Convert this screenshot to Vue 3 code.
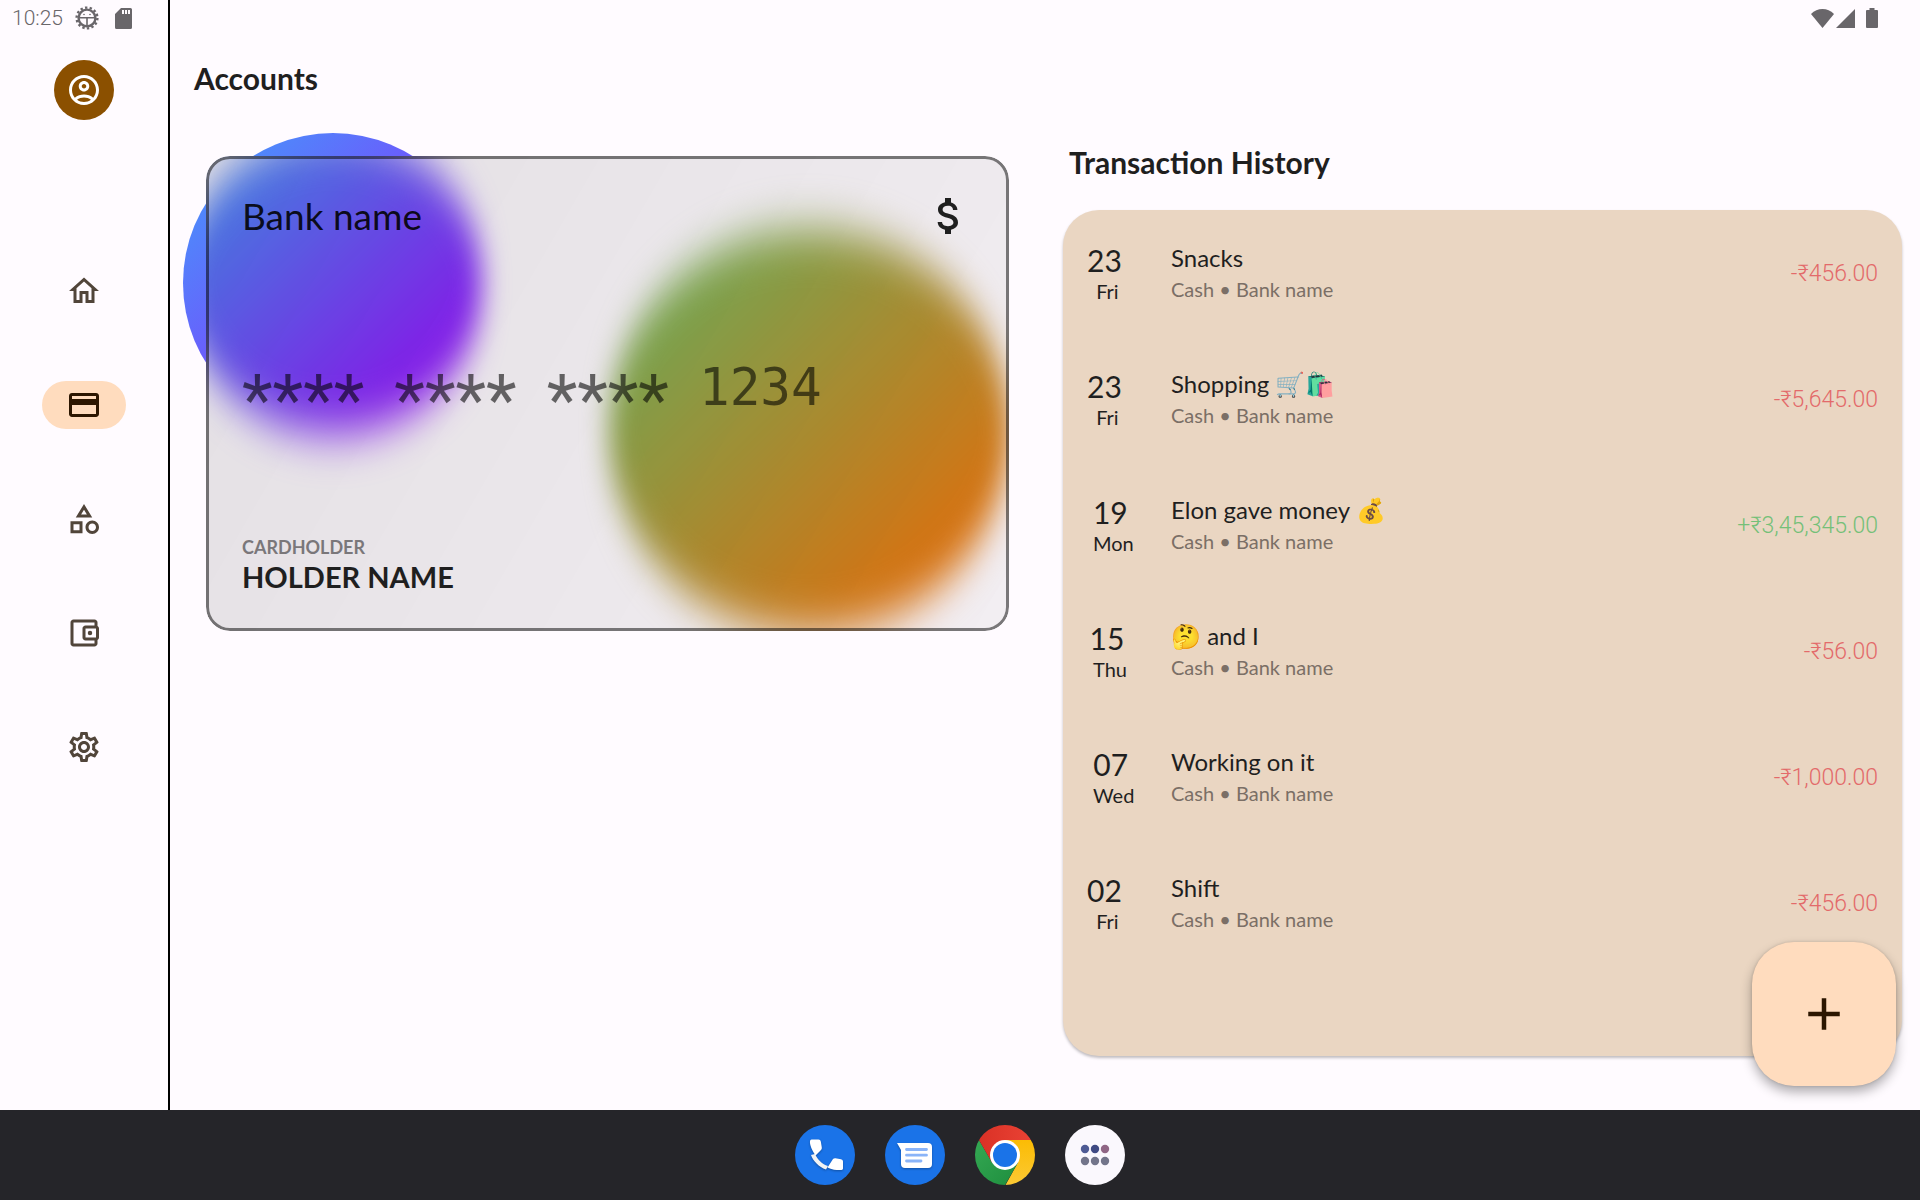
<script setup>
const navItems = [
  {
    label: 'Home',
    path: 'M12 5.69l5 4.5V18h-2v-6H9v6H7v-7.81l5-4.5M12 3L2 12h3v8h6v-6h2v6h6v-8h3L12 3z',
  },
  {
    label: 'Accounts',
    active: true,
    path: 'M20 4H4c-1.11 0-1.99.89-1.99 2L2 18c0 1.11.89 2 2 2h16c1.11 0 2-.89 2-2V6c0-1.11-.89-2-2-2zm0 14H4v-6h16v6zm0-10H4V6h16v2z',
  },
  {
    label: 'Categories',
    path: 'M12 2l-5.5 9h11L12 2zm0 3.84L13.93 9h-3.87L12 5.84zM17.5 13c-2.49 0-4.5 2.01-4.5 4.5s2.01 4.5 4.5 4.5 4.5-2.01 4.5-4.5-2.01-4.5-4.5-4.5zm0 7c-1.38 0-2.5-1.12-2.5-2.5s1.12-2.5 2.5-2.5 2.5 1.12 2.5 2.5-1.12 2.5-2.5 2.5zM3 21.5h8v-8H3v8zm2-6h4v4H5v-4z',
  },
  {
    label: 'Wallet',
    path: 'M21 7.28V5c0-1.1-.9-2-2-2H5c-1.11 0-2 .9-2 2v14c0 1.1.89 2 2 2h14c1.1 0 2-.9 2-2v-2.28c.59-.35 1-.98 1-1.72V9c0-.74-.41-1.37-1-1.72zM20 9v6h-7V9h7zM5 19V5h14v2h-6c-1.1 0-2 .9-2 2v6c0 1.1.9 2 2 2h6v2H5z M16 10.5a1.5 1.5 0 1 0 0 3a1.5 1.5 0 1 0 0-3z',
  },
  {
    label: 'Settings',
    path: 'M19.43 12.98c.04-.32.07-.64.07-.98 0-.34-.03-.66-.07-.98l2.11-1.65c.19-.15.24-.42.12-.64l-2-3.46c-.09-.16-.26-.25-.44-.25-.06 0-.12.01-.17.03l-2.49 1c-.52-.4-1.08-.73-1.69-.98l-.38-2.65C14.46 2.18 14.25 2 14 2h-4c-.25 0-.46.18-.49.42l-.38 2.65c-.61.25-1.17.59-1.69.98l-2.49-1c-.06-.02-.12-.03-.18-.03-.17 0-.34.09-.43.25l-2 3.46c-.13.22-.07.49.12.64l2.11 1.65c-.04.32-.07.65-.07.98 0 .33.03.66.07.98l-2.11 1.65c-.19.15-.24.42-.12.64l2 3.46c.09.16.26.25.44.25.06 0 .12-.01.17-.03l2.49-1c.52.4 1.08.73 1.69.98l.38 2.65c.03.24.24.42.49.42h4c.25 0 .46-.18.49-.42l.38-2.65c.61-.25 1.17-.59 1.69-.98l2.49 1c.06.02.12.03.18.03.17 0 .34-.09.43-.25l2-3.46c.12-.22.07-.49-.12-.64l-2.11-1.65zm-1.98-1.71c.04.31.05.52.05.73 0 .21-.02.43-.05.73l-.14 1.13.89.7 1.08.84-.7 1.21-1.27-.51-1.04-.42-.9.68c-.43.32-.84.56-1.25.73l-1.06.43-.16 1.13-.2 1.35h-1.4l-.19-1.35-.16-1.13-1.06-.43c-.43-.18-.83-.41-1.23-.71l-.91-.7-1.06.43-1.27.51-.7-1.21 1.08-.84.89-.7-.14-1.13c-.03-.31-.05-.54-.05-.74s.02-.43.05-.73l.14-1.13-.89-.7-1.08-.84.7-1.21 1.27.51 1.04.42.9-.68c.43-.32.84-.56 1.25-.73l1.06-.43.16-1.13.2-1.35h1.39l.19 1.35.16 1.13 1.06.43c.43.18.83.41 1.23.71l.91.7 1.06-.43 1.27-.51.7 1.21-1.07.85-.89.7.14 1.13zM12 8c-2.21 0-4 1.79-4 4s1.79 4 4 4 4-1.79 4-4-1.79-4-4-4zm0 6c-1.1 0-2-.9-2-2s.9-2 2-2 2 .9 2 2-.9 2-2 2z',
  },
]

const maskedGroups = ['****', '****', '****']

const transactions = [
  { day: '23', weekday: 'Fri', title: 'Snacks', amount: '-₹456.00' },
  { day: '23', weekday: 'Fri', title: 'Shopping 🛒🛍️', amount: '-₹5,645.00' },
  { day: '19', weekday: 'Mon', title: 'Elon gave money 💰', amount: '+₹3,45,345.00', income: true },
  { day: '15', weekday: 'Thu', title: '🤔 and I', amount: '-₹56.00' },
  { day: '07', weekday: 'Wed', title: 'Working on it', amount: '-₹1,000.00' },
  { day: '02', weekday: 'Fri', title: 'Shift', amount: '-₹456.00' },
]
</script>

<template>
  <div class="screen">
    <div class="app">
      <aside class="rail">
        <div class="status status-left">
          <time>10:25</time>
          <svg class="gear" viewBox="0 0 24 24" aria-hidden="true">
            <circle cx="12" cy="12" r="10.4" fill="none" stroke="currentColor" stroke-width="2.4" stroke-dasharray="2.4 2.267" />
            <circle cx="12" cy="12" r="8.4" fill="none" stroke="currentColor" stroke-width="2.4" />
            <path d="M4 11.800h16M12 12v8" fill="none" stroke="currentColor" stroke-width="1.600" />
            <circle cx="9" cy="8.500" r=".8" fill="currentColor" />
            <circle cx="15" cy="8.500" r=".8" fill="currentColor" />
          </svg>
          <svg class="sd" viewBox="0 0 17 21" aria-hidden="true">
            <path fill="currentColor" fill-rule="evenodd" d="M6 0h9.500q1.500 0 1.500 1.500v18q0 1.500-1.500 1.500h-14Q0 21 0 19.500V6zM7 2v4h2V2zM10 2v4h2V2zM13 2v4h2V2z" />
          </svg>
        </div>
        <button class="avatar" type="button" aria-label="Profile">
          <svg viewBox="0 0 24 24" aria-hidden="true">
            <path fill="currentColor" d="M12 2C6.480 2 2 6.480 2 12s4.480 10 10 10 10-4.480 10-10S17.520 2 12 2zM7.350 18.500C8.660 17.560 10.260 17 12 17s3.340.56 4.650 1.500C15.340 19.440 13.740 20 12 20s-3.340-.56-4.650-1.500zm10.790-1.380C16.450 15.800 14.320 15 12 15s-4.450.8-6.140 2.120C4.700 15.730 4 13.950 4 12c0-4.420 3.580-8 8-8s8 3.580 8 8c0 1.950-.7 3.730-1.860 5.120zM12 6c-1.930 0-3.500 1.570-3.500 3.500S10.070 13 12 13s3.500-1.570 3.500-3.500S13.930 6 12 6zm0 5c-.83 0-1.500-.67-1.500-1.500S11.170 8 12 8s1.500.67 1.500 1.500S12.830 11 12 11z" />
          </svg>
        </button>
        <nav class="nav" aria-label="Main">
          <button
            v-for="item in navItems"
            :key="item.label"
            type="button"
            class="nav-item"
            :class="{ active: item.active }"
            :aria-label="item.label"
          >
            <svg viewBox="0 0 24 24" aria-hidden="true"><path :d="item.path" fill="currentColor" /></svg>
          </button>
        </nav>
      </aside>

      <main class="content">
        <div class="status status-right">
          <svg class="wifi" viewBox="0 0 23 19" aria-hidden="true"><path fill="currentColor" d="M0 5Q5 0 11.500 0T23 5L11.500 19z" /></svg>
          <svg class="signal" viewBox="0 0 19 19" aria-hidden="true"><path fill="currentColor" d="M19 0v19H0z" /></svg>
          <svg class="battery" viewBox="0 0 12 20" aria-hidden="true"><path fill="currentColor" d="M3.500 0h5v2H11q1 0 1 1v16q0 1-1 1H1q-1 0-1-1V3q0-1 1-1h2.500z" /></svg>
        </div>

        <h1 class="heading">Accounts</h1>

        <div class="columns">
          <section>
            <div class="card-stage">
              <div class="orb orb-blue"></div>
              <article class="bank-card">
                <div class="glass" aria-hidden="true">
                  <div class="orb orb-blue blurred"></div>
                  <div class="orb orb-orange blurred"></div>
                  <div class="tint"></div>
                </div>
                <header class="card-top">
                  <span class="bank">Bank name</span>
                  <svg class="dollar" viewBox="0 0 24 24" role="img" aria-label="Dollar">
                    <path fill="currentColor" d="M11.800 10.900c-2.270-.59-3-1.200-3-2.150 0-1.090 1.010-1.850 2.700-1.850 1.780 0 2.440.85 2.500 2.100h2.210c-.07-1.720-1.120-3.300-3.210-3.810V3h-3v2.160c-1.940.42-3.500 1.680-3.500 3.610 0 2.310 1.910 3.460 4.700 4.130 2.500.6 3 1.480 3 2.410 0 .69-.49 1.790-2.700 1.790-2.060 0-2.870-.92-2.980-2.100h-2.200c.12 2.190 1.760 3.420 3.680 3.830V21h3v-2.150c1.950-.37 3.500-1.500 3.500-3.550 0-2.840-2.430-3.810-4.700-4.400z" />
                  </svg>
                </header>
                <div class="number">
                  <span v-for="(group, i) in maskedGroups" :key="i" class="mask">{{ group }}</span>
                  <span>1234</span>
                </div>
                <footer>
                  <div class="holder-label">CARDHOLDER</div>
                  <div class="holder">HOLDER NAME</div>
                </footer>
              </article>
            </div>
          </section>

          <section class="history">
            <h2 class="heading">Transaction History</h2>
            <ul class="list">
              <li v-for="(t, i) in transactions" :key="i" class="row">
                <div class="date">
                  <div class="date-stack">
                    <span class="day">{{ t.day }}</span>
                    <span class="weekday">{{ t.weekday }}</span>
                  </div>
                </div>
                <div class="info">
                  <div class="title">{{ t.title }}</div>
                  <div class="sub">Cash • Bank name</div>
                </div>
                <div class="amount" :class="{ income: t.income }">{{ t.amount }}</div>
              </li>
            </ul>
          </section>
        </div>

        <button class="fab" type="button" aria-label="Add transaction">
          <svg viewBox="0 0 24 24" aria-hidden="true"><path fill="currentColor" d="M19 13h-6v6h-2v-6H5v-2h6V5h2v6h6v2z" /></svg>
        </button>
      </main>
    </div>

    <footer class="dock">
      <button type="button" aria-label="Phone">
        <svg viewBox="0 0 60 60" aria-hidden="true">
          <circle cx="30" cy="30" r="30" fill="#1a73e8" />
          <g class="lifted">
            <path fill="#f1f3f4" d="M20 29C23 35 27 39 33 41L31 44.500C24 42 18 36 16 30z" />
            <path fill="#fff" d="M16.500 14.500h7q2 0 2.300 2l1 6q.2 1.500-.8 2.500L20.500 30.500q-2-3-3-5-3-6-2.500-9.500.2-1.500 1.500-1.500z" />
            <path fill="#fff" d="M48 43.500v-7q0-2-2-2.300l-5.500-.9q-1.500-.2-2.500.8L32.500 42.500q3 1.500 6.500 2.200 4 .6 7.500.3 1.500-.1 1.500-1.500z" />
          </g>
        </svg>
      </button>
      <button type="button" aria-label="Messages">
        <svg viewBox="0 0 60 60" aria-hidden="true">
          <circle cx="30" cy="30" r="30" fill="#1a73e8" />
          <path class="lifted" fill="#fff" d="M12 18h31q4 0 4 4v17q0 4-4 4H20q-4 0-4-4V25z" />
          <path d="M21.500 24.500h20M21.500 30.200h20M21.500 36h14.500" stroke="#8ab4f8" stroke-width="2.800" stroke-linecap="round" />
        </svg>
      </button>
      <button type="button" aria-label="Chrome">
        <svg viewBox="0 0 60 60" aria-hidden="true">
          <defs>
            <clipPath id="disc"><circle cx="30" cy="30" r="30" /></clipPath>
            <linearGradient id="chromeRed"><stop offset="0" stop-color="#d93025" /><stop offset="1" stop-color="#ea4335" /></linearGradient>
            <linearGradient id="chromeGreen" x1="0" y1="0" x2="1" y2="1"><stop offset="0" stop-color="#34a853" /><stop offset="1" stop-color="#1e8e3e" /></linearGradient>
            <linearGradient id="chromeYellow" x1="0" y1="1" x2="0" y2="0"><stop offset="0" stop-color="#fcc934" /><stop offset="1" stop-color="#fbbc04" /></linearGradient>
          </defs>
          <g clip-path="url(#disc)">
            <path fill="url(#chromeYellow)" d="M30 15h30v45H30.500L43 37.500z" />
            <path fill="url(#chromeGreen)" d="M30 60l13-22.500L30 30 17 37.500 4 15H0v45z" />
            <path fill="url(#chromeRed)" d="M4 15L0 0h60v15H30L17 37.500z" />
          </g>
          <circle cx="30" cy="30" r="15" fill="#fff" />
          <circle cx="30" cy="30" r="12" fill="#1a73e8" />
        </svg>
      </button>
      <button type="button" aria-label="All apps">
        <svg viewBox="0 0 60 60" aria-hidden="true">
          <circle cx="30" cy="30" r="30" fill="#faf8fd" />
          <circle cx="20" cy="24" r="4.200" fill="#4e5b94" />
          <circle cx="30" cy="24" r="4.200" fill="#3f4a83" />
          <circle cx="40" cy="24" r="4.200" fill="#8f6685" />
          <g fill="#72758a">
            <circle cx="20" cy="36" r="4.200" />
            <circle cx="30" cy="36" r="4.200" />
            <circle cx="40" cy="36" r="4.200" />
          </g>
        </svg>
      </button>
    </footer>

    <svg class="defs" aria-hidden="true">
      <filter id="frost" x="-30%" y="-30%" width="160%" height="160%" color-interpolation-filters="sRGB">
        <feGaussianBlur stdDeviation="13 24" />
      </filter>
    </svg>
  </div>
</template>

<style>
body {
  background: #fffbff;
}
</style>

<style scoped>
* {
  box-sizing: border-box;
}

.screen {
  display: flex;
  flex-direction: column;
  min-height: 100vh;
  background: #fffbff;
  color: #1f1f1f;
  font-family: Lato, 'Noto Sans', sans-serif;
}

button {
  padding: 0;
  border: 0;
  background: none;
  font: inherit;
  cursor: pointer;
}

svg {
  display: block;
  flex: none;
}

.app {
  display: flex;
  flex: 1;
}

/* Navigation rail */
.rail {
  display: flex;
  flex: 0 0 170px;
  flex-direction: column;
  align-items: center;
  border-right: 2px solid #000;
}

.status {
  display: flex;
  align-items: center;
  align-self: stretch;
  height: 36px;
  color: #69666a;
}

.status-left {
  padding-left: 12px;
  font: 300 21px/36px Roboto, sans-serif;
}

.gear {
  width: 24px;
  height: 24px;
  margin-left: 12px;
}

.sd {
  width: 17px;
  height: 21px;
  margin-left: 16px;
}

.avatar {
  display: grid;
  place-items: center;
  width: 60px;
  height: 60px;
  margin-top: 24px;
  border-radius: 50%;
  background: #8b5000;
  color: #fff;
}

.avatar svg,
.nav-item svg {
  width: 36px;
  height: 36px;
}

.nav {
  display: flex;
  flex-direction: column;
  gap: 66px;
  margin-top: 147px;
}

.nav-item {
  display: grid;
  place-items: center;
  width: 84px;
  height: 48px;
  border-radius: 24px;
  color: #51453a;
}

.nav-item.active {
  background: #ffdcbe;
  color: #2c1600;
}

/* Main area */
.content {
  position: relative;
  display: flex;
  flex: 1;
  flex-direction: column;
  min-width: 0;
}

.status-right {
  justify-content: flex-end;
  padding-right: 42px;
}

.wifi {
  width: 23px;
  height: 19px;
}

.signal {
  width: 19px;
  height: 19px;
  margin-left: 2px;
}

.battery {
  width: 12px;
  height: 20px;
  margin-left: 11px;
}

.heading {
  margin: 0;
  font-size: 30px;
  font-weight: 700;
  line-height: 36px;
}

h1.heading {
  padding: 24px 24px 36px;
}

.columns {
  display: grid;
  flex: 1;
  grid-template-columns: repeat(2, minmax(0, 1fr));
}

/* Bank card */
.card-stage {
  position: relative;
  padding: 24px 36px;
}

.orb {
  position: absolute;
  border-radius: 50%;
}

.orb-blue {
  top: 1px;
  left: 13px;
  width: 300px;
  height: 300px;
  background: linear-gradient(135deg, #40a0fa, #a400ff);
}

.bank-card {
  position: relative;
  display: flex;
  flex-direction: column;
  justify-content: space-between;
  min-height: 475px;
  padding: 36px;
  border-radius: 24px;
}

.glass {
  position: absolute;
  inset: 0;
  overflow: hidden;
  border-radius: 24px;
  background: #fffbff;
}

.glass .orb-blue {
  top: -23px;
  left: -23px;
}

.orb-orange {
  right: -1px;
  bottom: -1px;
  width: 402px;
  height: 402px;
  background: linear-gradient(135deg, #6bbf67, #ff6a00);
}

.blurred {
  filter: url(#frost);
}

.tint {
  position: absolute;
  inset: 0;
  border: 3px solid rgba(0, 0, 0, 0.5);
  border-radius: 24px;
  background: linear-gradient(120deg, rgba(0, 0, 0, 0.11), rgba(0, 0, 0, 0.05)) border-box;
}

.card-top,
.number,
.bank-card footer {
  position: relative;
}

.card-top {
  display: flex;
  align-items: center;
  justify-content: space-between;
}

.bank {
  color: rgba(0, 0, 0, 0.88);
  font-size: 37px;
  line-height: 48px;
}

.dollar {
  width: 48px;
  height: 48px;
}

.number {
  display: flex;
  gap: 30px;
  height: 60px;
  color: rgba(0, 0, 0, 0.58);
  font: 51px/60px 'DejaVu Sans Mono', monospace;
}

.mask {
  font: 400 71px/84px Roboto, sans-serif;
}

.holder-label {
  color: #7a777a;
  font-size: 18px;
  font-weight: 700;
  line-height: 24px;
}

.holder {
  font-size: 29px;
  font-weight: 700;
  line-height: 36px;
}

/* Transactions */
.history {
  display: flex;
  flex-direction: column;
  padding: 12px 18px 54px;
}

.history .heading {
  padding-left: 6px;
}

.list {
  flex: 1;
  margin: 30px 0 0;
  padding: 0 24px;
  border-radius: 36px;
  background: #ead6c2;
  box-shadow: 0 2px 3px rgba(0, 0, 0, 0.25);
  list-style: none;
}

.row {
  display: flex;
  align-items: center;
  height: 126px;
}

.date {
  display: flex;
  flex: 0 0 84px;
}

.date-stack {
  display: flex;
  flex-direction: column;
  align-items: center;
}

.day {
  font-size: 30px;
  line-height: 36px;
}

.weekday {
  padding-left: 6px;
  font-size: 20px;
  line-height: 26px;
}

.info {
  flex: 1;
}

.title {
  font-size: 24px;
  line-height: 32px;
}

.sub {
  color: #7b6f66;
  font-size: 20px;
  line-height: 30px;
}

.amount {
  color: #e36a6a;
  font: 300 23px/31px Roboto, 'Noto Sans', sans-serif;
}

.amount.income {
  color: #74c078;
}

.fab {
  position: absolute;
  right: 24px;
  bottom: 24px;
  display: grid;
  place-items: center;
  width: 144px;
  height: 144px;
  border-radius: 42px;
  background: #ffdcbe;
  box-shadow: 0 6px 12px rgba(0, 0, 0, 0.32), 0 0 3px rgba(0, 0, 0, 0.15);
  color: #2c1600;
}

.fab svg {
  width: 54px;
  height: 54px;
}

/* System dock */
.dock {
  display: flex;
  align-items: center;
  justify-content: center;
  gap: 30px;
  height: 90px;
  background: #252529;
}

.dock svg {
  width: 60px;
  height: 60px;
}

.lifted {
  filter: drop-shadow(0 1px 1px rgba(0, 0, 0, 0.3));
}

.defs {
  position: absolute;
  width: 0;
  height: 0;
}
</style>
